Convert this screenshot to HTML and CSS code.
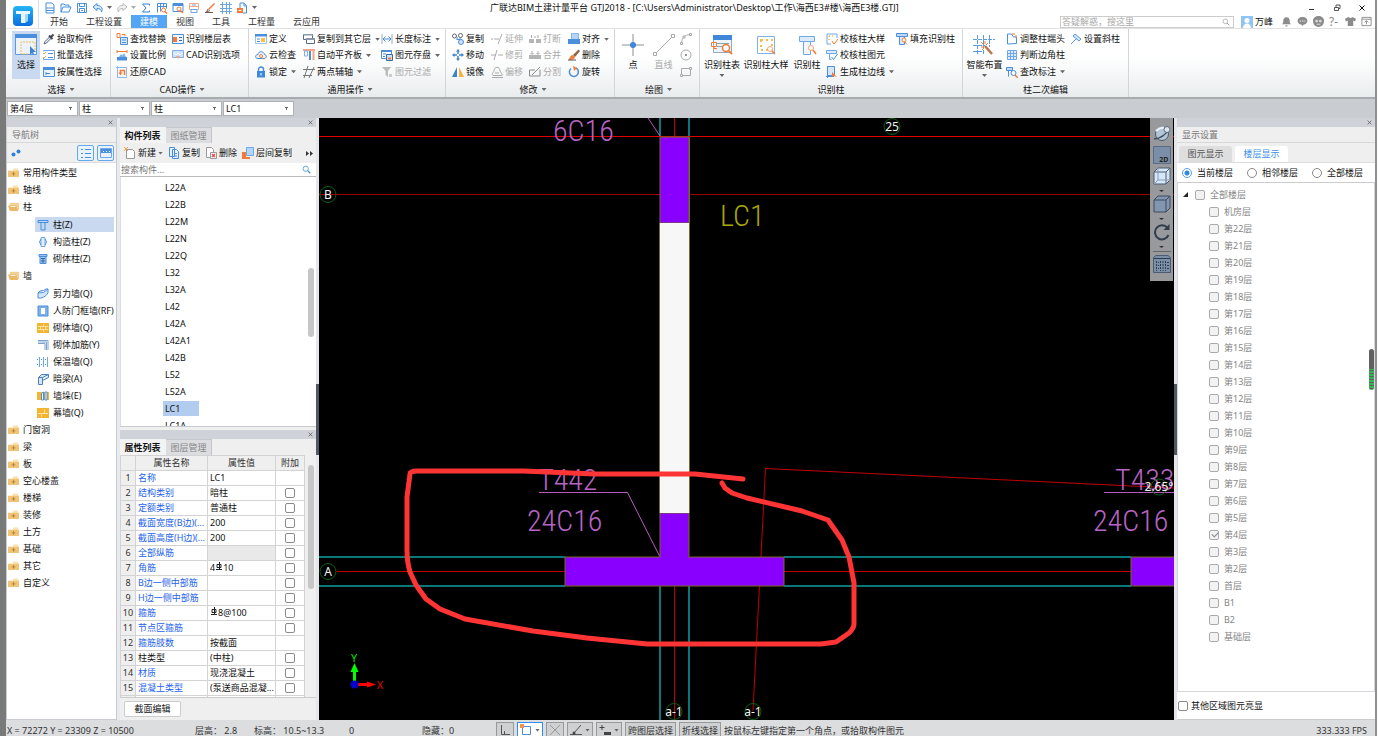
FILE: index.html
```html
<!DOCTYPE html>
<html lang="zh-CN">
<head>
<meta charset="utf-8">
<title>广联达BIM土建计量平台 GTJ2018</title>
<link rel="stylesheet" href="styles.css">
</head>
<body>
<svg class="sprite" aria-hidden="true">
  <symbol id="i-new" viewBox="0 0 12 12"><path d="M2 1h6l2 2v8H2zM2 6h8M2 8.500h8" fill="none" stroke="#4a8fdc"/></symbol>
  <symbol id="i-open" viewBox="0 0 12 12"><path d="M1 10V2h3l1 1h4v2M1 10l2-5h8l-2 5z" fill="none" stroke="#4a8fdc"/></symbol>
  <symbol id="i-save" viewBox="0 0 12 12"><path d="M1.500 1.500h9v9h-9zM3.500 1.500v3h5v-3M3.500 10.500v-4h5v4M5 8.500h2" fill="none" stroke="#4a8fdc"/></symbol>
  <symbol id="i-undo" viewBox="0 0 12 12"><path d="M5 1.500 1 5l4 3.500V6.500c3 0 4 1 4.500 3.500C11.500 6 9 3.500 5 3.500z" fill="#d6e7fa" stroke="#4a8fdc"/></symbol>
  <symbol id="i-redo" viewBox="0 0 12 12"><path d="M7 1.500 11 5 7 8.500V6.500c-3 0-4 1-4.500 3.500C.5 6 3 3.500 7 3.500z" fill="#f3f3f3" stroke="#b9b9b9"/></symbol>
  <symbol id="i-sum" viewBox="0 0 12 12"><path d="M9.500 3.500V2h-7L6 6l-3.500 4h7V8.500" fill="none" stroke="#2f80dc"/></symbol>
  <symbol id="i-calc" viewBox="0 0 12 12"><path d="M1.500 10.500v-9h9v5M1.500 4.500h9M4.500 1.500v8M7.500 1.500v4" fill="none" stroke="#4a8fdc"/><circle cx="7.500" cy="8" r="2" fill="#fff" stroke="#f47b37"/><path d="m9 9.500 2 2" stroke="#f47b37" stroke-width="1.500"/></symbol>
  <symbol id="i-view" viewBox="0 0 12 12"><path d="M1 1.500h10v8H1z" fill="#fff" stroke="#4a8fdc"/><path d="M1 1h10v3H1z" fill="#4a8fdc"/><circle cx="7" cy="7" r="2" fill="#fff" stroke="#f47b37"/><path d="m8.500 8.500 2.500 2.500" stroke="#f47b37" stroke-width="1.500"/></symbol>
  <symbol id="i-sheet" viewBox="0 0 12 12"><path d="M1.500 1.500h9v6h-9zM1.500 4.500h9" fill="none" stroke="#f6a77c"/><path d="M3 7.500h6v3H3z" fill="#fff" stroke="#6aa5e4"/><path d="M4 3h4" stroke="#6aa5e4"/></symbol>
  <symbol id="i-brush" viewBox="0 0 12 12"><path d="m4 7 6-6 1 1-6 6z" fill="#f47b37"/><path d="M4 7 2.500 10 6 8.500M1 10.500h8" fill="none" stroke="#7a5a50"/></symbol>
  <symbol id="i-grid" viewBox="0 0 12 12"><path d="M2.500 0v12M6.500 0v12M9.500 0v12M0 2.500h12M0 6.500h12M0 9.500h12" fill="none" stroke="#6aa5e4"/></symbol>
  <symbol id="i-lockdoc" viewBox="0 0 12 12"><path d="M4 6V1h4l2.500 2.500V11H7" fill="none" stroke="#4a8fdc"/><path d="M8 1v3h3" fill="none" stroke="#4a8fdc"/><path d="M1 6h6v5H1z" fill="#f47b37"/><path d="M2.500 8.500h3" stroke="#fff"/></symbol>
  <symbol id="i-select" viewBox="0 0 22 22"><path d="M.5.500h21v20H.5z" fill="#edf3fa" stroke="#5b9be2"/><path d="M0 0h22v4H0z" fill="#4a8fdc"/><path d="M20 16V8H6v12h7" fill="none" stroke="#f3bd52" stroke-dasharray="2 1"/><path d="M15 12v9l2-2 1 2 1-1-1-2h3z" fill="#3c83cf"/></symbol>
  <symbol id="i-pick" viewBox="0 0 12 12"><path d="m1 11 1-2.500 5-5L8.500 5l-5 5z" fill="#dbe9f7" stroke="#667"/><path d="m6 2.500 3.500 3.500M8 4l2.500-2.500" stroke="#445" stroke-width="2"/></symbol>
  <symbol id="i-batch" viewBox="0 0 12 12"><path d="M.5 2.500V1.500h11v9H.5V8" fill="none" stroke="#6ea8e6"/><path d="m0 4 1 1 2-2M0 8l1 1 2-2" fill="none" stroke="#f5ad4d"/><path d="M5 4.500h5M5 8.500h5" stroke="#4a8fdc"/></symbol>
  <symbol id="i-attr" viewBox="0 0 12 12"><path d="M.5 1.500h11v9H.5z" fill="#e9f3fd" stroke="#4a8fdc"/><path d="M0 1h12v3H0z" fill="#4a8fdc"/><path d="M3 6v3M3 7.500h4" stroke="#4a8fdc"/></symbol>
  <symbol id="i-find" viewBox="0 0 12 12"><path d="M4.500 4.500h7v7h-7z" fill="#d5e6f9" stroke="#4a8fdc"/><path d="M6 7h4M6 9.500h4" stroke="#4a8fdc"/><path d="M1 .5h3v4H1zM6 1.500h3v2" fill="none" stroke="#f47b37"/></symbol>
  <symbol id="i-scale" viewBox="0 0 12 12"><path d="M1 8h10v3.500H1z" fill="#4a8fdc"/><path d="m3 8 2-3 1.500 1.500L8 4l2 4z" fill="#7db3ee"/><path d="M1 4V1m0 1.500h10M11 1v3" fill="none" stroke="#f47b37"/></symbol>
  <symbol id="i-restore" viewBox="0 0 12 12"><path d="M1.500 0v11.500H11M0 1.500h10.500v9" fill="none" stroke="#8cb9ea"/><path d="M8.500 9V4.500h-4v3" fill="none" stroke="#f47b37" stroke-width="1.500"/><path d="m2.500 6.500 2 3 2-3z" fill="#f47b37"/></symbol>
  <symbol id="i-floor" viewBox="0 0 12 12"><path d="M.5 1.500h11v9H.5z" fill="#eef5fd" stroke="#4a8fdc"/><path d="M1 4h4v5H1z" fill="#f47b37"/><path d="M7 4.500h3M7 7.500h3" stroke="#35699f"/></symbol>
  <symbol id="i-cadopt" viewBox="0 0 12 12"><path d="M.5 1.500h11v7H.5z" fill="#cfe2f8" stroke="#7fb1e8"/><path d="M2 4l2 2 2-2 2 2 2-2" fill="none" stroke="#fff"/><path d="m4 7 2 3 2-3z" fill="#f5a57b"/></symbol>
  <symbol id="i-define" viewBox="0 0 12 12"><path d="M.5 1.500h11v9H.5z" fill="#fff" stroke="#9ac2ed"/><path d="M0 1h12v2.500H0z" fill="#4a8fdc"/><path d="M2 6h3M2 8.500h3" stroke="#4a8fdc"/><path d="M6 5h4v4H6z" fill="#f5c04d"/></symbol>
  <symbol id="i-cloud" viewBox="0 0 12 12"><path d="M3 9.500C-.5 9.500 0 5.500 3 5.500c.5-4 6-3.500 6.500 0 3 .5 2 4-.5 4z" fill="#eaf3fd" stroke="#4a8fdc"/><circle cx="6" cy="7" r="1.500" fill="#fff" stroke="#f47b37"/><path d="m7 8.500 2 2" stroke="#f47b37"/></symbol>
  <symbol id="i-lock" viewBox="0 0 12 12"><path d="M3.500 5V3.500a2.500 2.500 0 0 1 5 0V5" fill="none" stroke="#4a8fdc" stroke-width="1.500"/><path d="M2 5h8v6.500H2z" fill="#3f87d9"/><path d="M6 7v2.500" stroke="#fff"/></symbol>
  <symbol id="i-copyfloor" viewBox="0 0 12 12"><path d="M.5 1.500h9v5h-9z" fill="#fff" stroke="#556b86"/><path d="M3.500 5.500h8v5h-8z" fill="#fff" stroke="#556b86"/><path d="M3 5h9v2H3zM0 1h10v1.500H0z" fill="#8a98a8"/></symbol>
  <symbol id="i-align" viewBox="0 0 12 12"><path d="M0 1h12" stroke="#f0855c" stroke-width="1.500"/><path d="M1.500 2h3v5h-3z" fill="#fff" stroke="#7fb1e8"/><path d="M6 2h2v9H6z" fill="#4a8fdc"/><path d="M9.500 2h2v9h-2z" fill="#f5a57b"/></symbol>
  <symbol id="i-twopt" viewBox="0 0 12 12"><path d="M0 3.500h12M0 9.500h9M5 0 1 12M11 1 6 12" fill="none" stroke="#777"/></symbol>
  <symbol id="i-dim" viewBox="0 0 12 12"><path d="M1 1v10M11 1v10" stroke="#9ab"/><path d="M2 6h8M4.500 3.500 2 6l2.500 2.500M7.500 3.500 10 6 7.500 8.500" fill="none" stroke="#4a8fdc"/></symbol>
  <symbol id="i-store" viewBox="0 0 12 12"><path d="M.5 1.500h10v8H.5z" fill="#fff" stroke="#4a8fdc"/><path d="M0 1h11v2H0z" fill="#4a8fdc"/><path d="M2 5h3M2 7.500h2" stroke="#4a8fdc"/><path d="M5.500 5.500h6v6h-6z" fill="#cfe2f8" stroke="#35699f"/><path d="M7 9.500h3" stroke="#f47b37" stroke-width="2"/></symbol>
  <symbol id="i-filter" viewBox="0 0 12 12"><path d="M1 1h9L7 5v6L4.500 9V5z" fill="#bbb"/><path d="M8 8h3v3H8z" fill="#ccc"/></symbol>
  <symbol id="i-copy" viewBox="0 0 12 12"><circle cx="2.500" cy="3" r="2" fill="none" stroke="#666"/><circle cx="8.500" cy="2.500" r="2" fill="none" stroke="#666"/><path d="M5 6.500h3v-2M5 4v3" fill="none" stroke="#4a8fdc"/><circle cx="9" cy="9" r="2.500" fill="#cfe2f8" stroke="#4a8fdc"/></symbol>
  <symbol id="i-move" viewBox="0 0 12 12"><path d="M6 0 4 2.500h4zM6 12 4 9.500h4zM0 6l2.500-2v4zM12 6 9.500 4v4z" fill="#3c83cf"/><path d="M6 2v3M6 7v3M2 6h3M7 6h3" stroke="#3c83cf" stroke-width="1.500"/></symbol>
  <symbol id="i-mirror" viewBox="0 0 12 12"><path d="M5 1v10H0z" fill="#3c83cf"/><path d="M7 1v10h5z" fill="#f5b23d"/></symbol>
  <symbol id="i-extend" viewBox="0 0 12 12"><path d="M0 6h2M3 6h5M11 1 7 11" fill="none" stroke="#aaa"/></symbol>
  <symbol id="i-trim" viewBox="0 0 12 12"><path d="M0 6h5M7 6h5M6 1 3 11" fill="none" stroke="#aaa"/></symbol>
  <symbol id="i-offset" viewBox="0 0 12 12"><path d="M2 9.500C0 8 3 6 3 5c0-5 6-5 6 0 0 1 3 3 2 4.500zM1 11.500h11M4 7h4" fill="none" stroke="#aaa"/></symbol>
  <symbol id="i-break" viewBox="0 0 12 12"><path d="M0 6h5v4H0zM7 6h5v4H7z" fill="#b5b5b5"/><path d="M2.500 2v3M9 2v3M5 4h2" stroke="#aaa"/></symbol>
  <symbol id="i-merge" viewBox="0 0 12 12"><path d="M0 6h12v4H0z" fill="#b5b5b5"/><path d="M3 2v3M9 2v3M1.500 4 3 5.500 4.500 4M7.500 4 9 5.500 10.500 4" fill="none" stroke="#aaa"/></symbol>
  <symbol id="i-split" viewBox="0 0 12 12"><path d="M11 3.500V10H.5V4H6M3 9l8-8" fill="none" stroke="#8a8a8a"/></symbol>
  <symbol id="i-alignto" viewBox="0 0 12 12"><path d="M3.500.500h7v6h-7z" fill="#b5d3f5" stroke="#86b5ea"/><path d="M0 6h12v5H0z" fill="#4a8fdc"/></symbol>
  <symbol id="i-erase" viewBox="0 0 12 12"><path d="m5 6 5.500-5.500L12 2 7 8z" fill="#8a6548"/><path d="M1 11c0-3 2-5 4-5l2 2c0 2-3 3-6 3z" fill="#f0803a"/><path d="M0 11h8" stroke="#555"/></symbol>
  <symbol id="i-rotate" viewBox="0 0 12 12"><path d="M3 2.500a4.500 4.500 0 1 0 5-.5" fill="none" stroke="#4a8fdc" stroke-width="1.500"/><path d="m5 0 4 2-3 3z" fill="#f47b37"/></symbol>
  <symbol id="i-point" viewBox="0 0 22 22"><path d="M11 0v22M0 11h22" stroke="#8a9096"/><circle cx="11" cy="11" r="3" fill="#3f87d9"/></symbol>
  <symbol id="i-line" viewBox="0 0 22 22"><path d="M2 20 20 2" stroke="#aaa"/><path d="M.5 18.500h3v3h-3zM18.500.500h3v3h-3z" fill="#fff" stroke="#aaa"/></symbol>
  <symbol id="i-arc" viewBox="0 0 12 12"><path d="M1.500 10Q2 2 10 1.500" fill="none" stroke="#aaa"/><path d="M.5 9.500h2v2h-2zM9.500.500h2v2h-2zM3 3h2v2H3z" fill="#fff" stroke="#aaa"/></symbol>
  <symbol id="i-circle" viewBox="0 0 12 12"><circle cx="6" cy="6" r="5" fill="none" stroke="#aaa"/><path d="M5 5h2v2H5z" fill="#999"/></symbol>
  <symbol id="i-rect" viewBox="0 0 12 12"><path d="M1.500 2.500h9v7h-9z" fill="none" stroke="#aaa"/><path d="M.5 8.500h2v2h-2zM9.500 1.500h2v2h-2z" fill="#fff" stroke="#aaa"/></symbol>
  <symbol id="i-coltable" viewBox="0 0 22 22"><path d="M2.500 2.500h18v16h-18z" fill="#eef4fb" stroke="#98a8b8"/><path d="M2 1h19v5H2z" fill="#3f87d9"/><path d="M6 9.500h12M6 12.500h6" stroke="#8aa"/><path d="M.5 8.500h5v4h-5zM3 12.500v2h3" fill="none" stroke="#f47b37"/><circle cx="15" cy="14" r="3.500" fill="#fff" stroke="#f47b37" stroke-width="1.500"/><path d="m18 17 3 3" stroke="#f47b37" stroke-width="2"/></symbol>
  <symbol id="i-coldetail" viewBox="0 0 22 22"><path d="M2.500 2.500h17v17h-17z" fill="#fff" stroke="#7fb1e8"/><path d="M6 6h11v10H6z" fill="none" stroke="#f3bd52" stroke-width="2" stroke-dasharray="2 3"/><circle cx="15" cy="15" r="2.500" fill="#fff" stroke="#f5a57b"/><path d="m17 17 3 3" stroke="#f47b37" stroke-width="1.500"/></symbol>
  <symbol id="i-column" viewBox="0 0 22 22"><path d="M3.500 2.500h15v5h-15z" fill="#dceafa" stroke="#6ea8e6"/><path d="M7.500 7.500h7v13h-7z" fill="#f3f8fe" stroke="#6ea8e6"/><circle cx="15" cy="14" r="2.500" fill="#fff" stroke="#f5a57b"/><path d="m17 16 3 4" stroke="#f47b37" stroke-width="1.500"/></symbol>
  <symbol id="i-chkdetail" viewBox="0 0 12 12"><path d="M11 5V1H1v10h4" fill="none" stroke="#6ea8e6"/><path d="M3 3h6M3 3v6" stroke="#f3bd52" stroke-width="1.500" stroke-dasharray="1 2"/><path d="m6 8 2 3 4-5" fill="none" stroke="#f47b37"/></symbol>
  <symbol id="i-chkelem" viewBox="0 0 12 12"><path d="M.5 1.500h10v3H.5zM3.500 4.500v6h2" fill="#dceafa" stroke="#6ea8e6"/><path d="m5.500 8 2 2.500L11.500 5" fill="none" stroke="#4a8fdc"/></symbol>
  <symbol id="i-gen" viewBox="0 0 12 12"><path d="M1.500.500h7v9h-7z" fill="#d5e6f9" stroke="#4a8fdc"/><path d="M1.500 0v12M0 10.500h8" stroke="#4a8fdc"/><path d="M6 6v5l2-1 3 1z" fill="#f47b37"/></symbol>
  <symbol id="i-fill" viewBox="0 0 12 12"><path d="M.5.500h11v3H.5z" fill="#bcd8f6" stroke="#4a8fdc"/><path d="M3.500 3.500h5v8h-5z" fill="#dceafa" stroke="#4a8fdc"/><circle cx="8" cy="7" r="2" fill="#fff" stroke="#f47b37"/><path d="m9 9 2 2.500" stroke="#f47b37"/></symbol>
  <symbol id="i-smart" viewBox="0 0 22 22"><path d="M4.500 1v20M10.500 1v20M16.500 1v12M0 5.500h22M0 11.500h12M0 17.500h9" fill="none" stroke="#5b9be2" stroke-dasharray="4 1"/><path d="m12 12 7 8" stroke="#b8774e" stroke-width="2.500"/><path d="m8 8 3 3M12 7v3M8 13h3M15 9l-2 2M9 16l2-2" stroke="#f47b37"/></symbol>
  <symbol id="i-corner" viewBox="0 0 12 12"><path d="M1.500 11V1h4l2 3h3v6.500z" fill="#fff" stroke="#4a8fdc"/><path d="M6 1h3M10 2v3" stroke="#f47b37"/></symbol>
  <symbol id="i-judge" viewBox="0 0 12 12"><path d="M1.500 1.500h9v9h-9zM4.500 1v10M7.500 1v10M1 4.500h10M1 7.500h10" fill="#dceafa" stroke="#6ea8e6"/></symbol>
  <symbol id="i-mark" viewBox="0 0 12 12"><path d="M.5 1.500h6v3h-6zM2.500 4.500v6" fill="#bcd8f6" stroke="#4a8fdc"/><circle cx="7.500" cy="7" r="2.500" fill="#fff" stroke="#4a8fdc"/><path d="m9 9 3 3" stroke="#f47b37" stroke-width="1.500"/></symbol>
  <symbol id="i-slant" viewBox="0 0 12 12"><path d="m5 1 6 5-2 2-6-5zM6.500 5.500l-5.500 5.500" fill="#d5e6f9" stroke="#5b9be2"/></symbol>
  <symbol id="i-search" viewBox="0 0 12 12"><circle cx="5" cy="5" r="3.500" fill="none" stroke="currentColor"/><path d="m7.500 7.500 3.500 3.500" stroke="currentColor" stroke-width="1.500"/></symbol>
  <symbol id="i-user" viewBox="0 0 12 12"><path d="M0 0h12v12H0z" fill="#8fc4f5"/><circle cx="6" cy="4.500" r="2.500" fill="#fff"/><path d="M2 12c0-6 8-6 8 0z" fill="#fff"/></symbol>
  <symbol id="i-bell" viewBox="0 0 12 12"><path d="M1 9c1.500-1 1.500-2 1.500-4 0-5 7-5 7 0 0 2 0 3 1.500 4zM5 10h2v1.500H5z" fill="#8b8b8b"/></symbol>
  <symbol id="i-chat" viewBox="0 0 12 12"><path d="M6 1c7 0 7 8 1 8.500L6 11 5 9.500C-1 9-1 1 6 1z" fill="#8b8b8b"/><path d="M3 5.500h1.500M5.500 5.500H7M8 5.500h1" stroke="#fff"/></symbol>
  <symbol id="i-face" viewBox="0 0 12 12"><path d="M6 0c3 0 6 2 6 5 0 5-3 7-6 7S0 10 0 5c0-3 3-5 6-5z" fill="#8b8b8b"/><circle cx="4" cy="5.500" r="1.500" fill="#ddd"/><circle cx="8" cy="5.500" r="1.500" fill="#ddd"/><path d="M4 9h4" stroke="#ddd"/></symbol>
  <symbol id="i-shirt" viewBox="0 0 12 12"><path d="M4 1 0 3l1 3 2-1v6h6V5l2 1 1-3-4-2Q6 3.500 4 1z" fill="#8b8b8b"/></symbol>
  <symbol id="i-collapse" viewBox="0 0 12 12"><path d="M1 1.500h10v9H1zM1 3.500h10M6 9V5.500M4 7l2-2 2 2" fill="none" stroke="#8b8b8b"/></symbol>
  <symbol id="i-min" viewBox="0 0 12 12"><path d="M3 7.500h5" stroke="#333"/></symbol>
  <symbol id="i-max" viewBox="0 0 12 12"><path d="M3.500 5.500h4v3h-4zM5 5V3h4v3.500H8" fill="none" stroke="#555"/></symbol>
  <symbol id="i-close" viewBox="0 0 12 12"><path d="m3.500 3.500 5 5M8.500 3.500l-5 5" stroke="currentColor"/></symbol>
  <symbol id="i-folder" viewBox="0 0 12 12"><path d="M0 4h5l1-2h5v2h1v7H0z" fill="#f0c377"/><path d="M6 2h5v2H5z" fill="#fae3b5"/><path d="M6 5.500v4M4 7.500h4" stroke="#b08430"/></symbol>
  <symbol id="i-folderopen" viewBox="0 0 12 12"><path d="M2 2h10v8H2z" fill="#f4d192"/><path d="M0 5h9l2 6H2z" fill="#edb866"/><path d="M3 6h5" stroke="#fff"/></symbol>
  <symbol id="i-col" viewBox="0 0 12 12"><path d="M1 1.500h10v2H1zM4 3.500h4v7.500H4z" fill="#bcd8f6" stroke="#4a8fdc"/></symbol>
  <symbol id="i-gzz" viewBox="0 0 12 12"><path d="M4 1.500h4v9H4z" fill="#e5f0fc" stroke="#6ea8e6"/><path d="M4 3Q1 6 4 9M8 3q3 3 0 6" fill="none" stroke="#4a8fdc"/></symbol>
  <symbol id="i-qtz" viewBox="0 0 12 12"><path d="M2 1.500h8v2H2zM3 3.500h6v7H3z" fill="#9cc5f2" stroke="#4a8fdc"/><path d="M4 5.500h4M4 8h4M6 5v5" stroke="#3069a8"/></symbol>
  <symbol id="i-wall" viewBox="0 0 12 12"><path d="M1 5q6 1 10-4v4Q7 11 1 10zM1 5l2-2q4 0 6-2h2" fill="#d5e6f9" stroke="#4a8fdc"/></symbol>
  <symbol id="i-frame" viewBox="0 0 12 12"><path d="M1 1h10v10H1z" fill="#7fb1e8" stroke="#4a8fdc"/><path d="M4 3h4v6H4z" fill="#fff"/></symbol>
  <symbol id="i-brick" viewBox="0 0 12 12"><path d="M0 1h12v10H0z" fill="#f5b52e"/><path d="M1 4.500h10M1 7.500h10M6.500 2v2M3.500 5v2M8.500 5v2M6.500 8v2" stroke="#fde2a0"/></symbol>
  <symbol id="i-rebar" viewBox="0 0 12 12"><path d="M1 1.500h10V11M1 4.500h7V11M1 3h8.500v8" fill="none" stroke="#7da2cc"/></symbol>
  <symbol id="i-insul" viewBox="0 0 12 12"><path d="M2.500 1v10M6.500 1v10M10.500 1v10" stroke="#6ea8e6"/><path d="M4 3.500h1M4 8.500h1M8 3.500h1M8 8.500h1M0 3.500h1M0 8.500h1" stroke="#4a8fdc"/></symbol>
  <symbol id="i-beam" viewBox="0 0 12 12"><path d="M1.500 4.500h4v7h-4zM1.500 4.500l3-3h7l-6 3M11.500 1.500v3l-6 3" fill="#d5e6f9" stroke="#4a80bc"/></symbol>
  <symbol id="i-pier" viewBox="0 0 12 12"><path d="M0 2h12v8H0z" fill="#f5b52e"/><path d="M4.500 3.500 6.500 2v8h-2zM8 2h2v8H8z" fill="#fff" stroke="#4a8fdc"/></symbol>
  <symbol id="i-curtain" viewBox="0 0 12 12"><path d="M0 1h12v10H0z" fill="#f5b52e"/><path d="M1 6.500h10M7.500 2v4M4.500 7v3" stroke="#fde2a0"/></symbol>
  <symbol id="i-dots" viewBox="0 0 12 12"><circle cx="3.500" cy="7.500" r="2" fill="#2f80dc"/><circle cx="8.500" cy="4.500" r="2" fill="#2f80dc"/></symbol>
  <symbol id="i-list" viewBox="0 0 12 12"><path d="M1 2.500h2M1 6.500h2M1 10.500h2M5 2.500h6M5 6.500h6M5 10.500h6" stroke="#4a8fdc"/></symbol>
  <symbol id="i-cards" viewBox="0 0 12 12"><path d="M.5 1.500h11v9H.5z" fill="#eaf3fd" stroke="#6ea8e6"/><path d="M1 2h10v4H1z" fill="#4a8fdc"/><path d="M3 4.500h1M6 4.500h1M9 4.500h1" stroke="#fff"/></symbol>
  <symbol id="i-add" viewBox="0 0 12 12"><path d="M2.500 2.500h6l2 2v7h-8z" fill="#fff" stroke="#9a9a9a"/><path d="m0 0 4 4M4 0 0 4" stroke="#f5a04d"/></symbol>
  <symbol id="i-dup" viewBox="0 0 12 12"><path d="M1.500.500h5v9h-5zM4.500 2.500h4l2 2v7h-6z" fill="#e5f0fc" stroke="#4a8fdc"/><path d="M6 6.500h3M6 9h3" stroke="#4a8fdc"/></symbol>
  <symbol id="i-del" viewBox="0 0 12 12"><path d="M1.500.500h5l2 2v8h-7z" fill="#fff" stroke="#9a9a9a"/><path d="M5.500 5.500h6v6h-6z" fill="#fff" stroke="#999"/><path d="m7 7 3 3M10 7l-3 3" stroke="#e05050" stroke-width="1.500"/></symbol>
  <symbol id="i-layers" viewBox="0 0 12 12"><path d="M0 5h4v5h4v2H0z" fill="#f47b37"/><path d="M4.500.500h7v8h-7z" fill="#b5d5f8" stroke="#6ea8e6"/></symbol>
  <symbol id="i-more" viewBox="0 0 12 12"><path d="M2 4v5l3-2.500zM6 4v5l3-2.500z" fill="#333"/></symbol>
  <symbol id="i-orbit" viewBox="0 0 18 18"><circle cx="9" cy="9" r="6.500" fill="#b5c5d8" stroke="#49586b"/><path d="M3 6q4-4 8-3" fill="none" stroke="#edf3f9" stroke-width="2"/><path d="M1 14Q11 13 16 4" fill="none" stroke="#3c4a5c" stroke-width="1.500"/><circle cx="14" cy="4.500" r="3" fill="#dce5ee" stroke="#5a697c"/></symbol>
  <symbol id="i-2d" viewBox="0 0 18 18"><path d="M.5.500h17v17H.5z" fill="#7b8ea8" stroke="#5a6b84"/></symbol>
  <symbol id="i-box" viewBox="0 0 18 18"><path d="M1 5h12v12H1zM1 5l4-4h12v12l-4 4M13 5l4-4" fill="#d4e8fa" stroke="#4c5a6c"/><path d="M5 1v12h12M5 13l-4 4" fill="none" stroke="#8a9aae"/></symbol>
  <symbol id="i-cube" viewBox="0 0 18 18"><path d="M1 5h12v12H1zM1 5l4-4h12v12l-4 4M13 5l4-4" fill="#8296b0" stroke="#3c4a5c"/></symbol>
  <symbol id="i-turn" viewBox="0 0 18 18"><path d="M14.500 5a7 7 0 1 0 1 7" fill="none" stroke="#303d4d" stroke-width="2"/><path d="M16.500 1v6h-6z" fill="#303d4d"/></symbol>
  <symbol id="i-prop" viewBox="0 0 18 18"><path d="M.5 2.500 3 .5h12l2.500 2v15H.5z" fill="#7b8ea8" stroke="#4b5b72"/><path d="M1 3.500h16" stroke="#303d4d"/><path d="M3.500 6v10M7.500 6v10M12.500 6v10M10 6v10" stroke="#303d4d" stroke-dasharray="2 1"/><path d="M5 7.500h1M5 10.500h1M5 13.500h1M14 7.500h2M14 10.500h2M14 13.500h2" stroke="#303d4d"/></symbol>
  <symbol id="i-angle" viewBox="0 0 12 12"><path d="M2.500 1v9.500H11M5.500 10V7" fill="none" stroke="#555"/></symbol>
  <symbol id="i-boxsel" viewBox="0 0 12 12"><path d="M2.500 2.500h8v8h-8z" fill="#fff" stroke="#4a8fdc"/><path d="M0 0h4v4H0z" fill="#f5904d"/></symbol>
  <symbol id="i-cross" viewBox="0 0 12 12"><path d="m1 1 10 10M11 1 1 11" stroke="#999"/></symbol>
  <symbol id="i-slope" viewBox="0 0 12 12"><path d="M11 1 4 9M0 10.500h12" fill="none" stroke="#555"/><circle cx="4" cy="9" r="1.500" fill="#444"/></symbol>
  <symbol id="i-plusbox" viewBox="0 0 12 12"><path d="M3 1v5M.5 3.500h5" stroke="#444"/><path d="M5 8h7v3H5z" fill="#444"/></symbol>
</svg>

<header class="titlebar">
  <svg class="logo" viewBox="0 0 22 22" role="img" aria-label="GTJ"><defs><linearGradient id="lg" x1="0" y1="0" x2="0" y2="1"><stop offset="0" stop-color="#25b4f5"/><stop offset="1" stop-color="#0a6fe0"/></linearGradient></defs><rect x="1" y="1" width="20" height="20" rx="4" fill="url(#lg)"/><path d="M4 6h14v3h-5v9H9V9H4z" fill="#eaf7ff"/><path d="M13 9v9l3-2V9z" fill="#9fd6fb"/></svg>
  <div class="titlerows">
    <div class="toprow">
      <nav class="quick" aria-label="快速访问">
        <button aria-label="新建工程"><svg><use href="#i-new"/></svg></button><button aria-label="打开"><svg><use href="#i-open"/></svg></button><button aria-label="保存"><svg><use href="#i-save"/></svg></button><button aria-label="撤销"><svg><use href="#i-undo"/></svg><i class="caret"></i></button><button aria-label="恢复"><svg><use href="#i-redo"/></svg><i class="caret dim"></i></button><button aria-label="汇总"><svg><use href="#i-sum"/></svg></button><button aria-label="查量"><svg><use href="#i-calc"/></svg></button><button aria-label="查看"><svg><use href="#i-view"/></svg></button><button aria-label="报表"><svg><use href="#i-sheet"/></svg></button><button aria-label="刷"><svg><use href="#i-brush"/></svg></button><button aria-label="轴网"><svg><use href="#i-grid"/></svg></button><button aria-label="锁定工程"><svg><use href="#i-lockdoc"/></svg></button><i class="caret"></i>
      </nav>
      <h1 class="apptitle">广联达BIM土建计量平台 GTJ2018 - [C:\Users\Administrator\Desktop\工作\海西E3#楼\海西E3楼.GTJ]</h1>
      <div class="winctl"><button aria-label="最小化"><svg><use href="#i-min"/></svg></button><button aria-label="还原"><svg><use href="#i-max"/></svg></button><button aria-label="关闭"><svg><use href="#i-close"/></svg></button></div>
    </div>
    <div class="tabrow">
      <nav class="tabs"><button>开始</button><button>工程设置</button><button class="on">建模</button><button>视图</button><button>工具</button><button>工程量</button><button>云应用</button></nav>
      <div class="help">
        <label class="ask"><input type="text" placeholder="答疑解惑，搜这里" aria-label="答疑解惑"><svg><use href="#i-search"/></svg></label>
        <button class="user"><svg><use href="#i-user"/></svg>万峰</button>
        <div class="helpicons"><button aria-label="通知"><svg><use href="#i-bell"/></svg></button><button aria-label="消息"><svg><use href="#i-chat"/></svg></button><button aria-label="客服"><svg><use href="#i-face"/></svg></button><button class="q">?<span>-</span></button><button aria-label="皮肤"><svg><use href="#i-shirt"/></svg></button><button aria-label="收起"><svg><use href="#i-collapse"/></svg></button></div>
      </div>
    </div>
  </div>
</header>

<section class="ribbon">
  <div class="group g1"><div class="tools">
    <button class="big on"><svg><use href="#i-select"/></svg>选择</button>
    <div class="stack"><button><svg><use href="#i-pick"/></svg>拾取构件</button><button><svg><use href="#i-batch"/></svg>批量选择</button><button><svg><use href="#i-attr"/></svg>按属性选择</button></div>
  </div><p class="name">选择<i class="caret"></i></p></div>
  <div class="group g2"><div class="tools">
    <div class="stack"><button><svg><use href="#i-find"/></svg>查找替换</button><button><svg><use href="#i-scale"/></svg>设置比例</button><button><svg><use href="#i-restore"/></svg>还原CAD</button></div>
    <div class="stack"><button><svg><use href="#i-floor"/></svg>识别楼层表</button><button><svg><use href="#i-cadopt"/></svg>CAD识别选项</button></div>
  </div><p class="name">CAD操作<i class="caret"></i></p></div>
  <div class="group g3"><div class="tools">
    <div class="stack"><button><svg><use href="#i-define"/></svg>定义</button><button><svg><use href="#i-cloud"/></svg>云检查</button><button><svg><use href="#i-lock"/></svg>锁定<i class="caret"></i></button></div>
    <div class="stack"><button><svg><use href="#i-copyfloor"/></svg>复制到其它层<i class="caret"></i></button><button><svg><use href="#i-align"/></svg>自动平齐板<i class="caret"></i></button><button><svg><use href="#i-twopt"/></svg>两点辅轴<i class="caret"></i></button></div>
    <div class="stack"><button><svg><use href="#i-dim"/></svg>长度标注<i class="caret"></i></button><button><svg><use href="#i-store"/></svg>图元存盘<i class="caret"></i></button><button disabled><svg><use href="#i-filter"/></svg>图元过滤</button></div>
  </div><p class="name">通用操作<i class="caret"></i></p></div>
  <div class="group g4"><div class="tools">
    <div class="stack"><button><svg><use href="#i-copy"/></svg>复制</button><button><svg><use href="#i-move"/></svg>移动</button><button><svg><use href="#i-mirror"/></svg>镜像</button></div>
    <div class="stack"><button disabled><svg><use href="#i-extend"/></svg>延伸</button><button disabled><svg><use href="#i-trim"/></svg>修剪</button><button disabled><svg><use href="#i-offset"/></svg>偏移</button></div>
    <div class="stack"><button disabled><svg><use href="#i-break"/></svg>打断</button><button disabled><svg><use href="#i-merge"/></svg>合并</button><button disabled><svg><use href="#i-split"/></svg>分割</button></div>
    <div class="stack"><button><svg><use href="#i-alignto"/></svg>对齐<i class="caret"></i></button><button><svg><use href="#i-erase"/></svg>删除</button><button><svg><use href="#i-rotate"/></svg>旋转</button></div>
  </div><p class="name">修改<i class="caret"></i></p></div>
  <div class="group g5"><div class="tools">
    <button class="big"><svg><use href="#i-point"/></svg>点</button>
    <button class="big" disabled><svg><use href="#i-line"/></svg>直线</button>
    <div class="stack"><button disabled aria-label="弧"><svg><use href="#i-arc"/></svg></button><button disabled aria-label="圆"><svg><use href="#i-circle"/></svg></button><button disabled aria-label="矩形"><svg><use href="#i-rect"/></svg></button></div>
  </div><p class="name">绘图<i class="caret"></i></p></div>
  <div class="group g6"><div class="tools">
    <button class="big"><svg><use href="#i-coltable"/></svg>识别柱表<i class="caret"></i></button>
    <button class="big"><svg><use href="#i-coldetail"/></svg>识别柱大样</button>
    <button class="big"><svg><use href="#i-column"/></svg>识别柱</button>
    <div class="stack"><button><svg><use href="#i-chkdetail"/></svg>校核柱大样</button><button><svg><use href="#i-chkelem"/></svg>校核柱图元</button><button><svg><use href="#i-gen"/></svg>生成柱边线<i class="caret"></i></button></div>
    <div class="stack"><button><svg><use href="#i-fill"/></svg>填充识别柱</button></div>
  </div><p class="name">识别柱</p></div>
  <div class="group g7"><div class="tools">
    <button class="big"><svg><use href="#i-smart"/></svg>智能布置<i class="caret"></i></button>
    <div class="stack"><button><svg><use href="#i-corner"/></svg>调整柱端头</button><button><svg><use href="#i-judge"/></svg>判断边角柱</button><button><svg><use href="#i-mark"/></svg>查改标注<i class="caret"></i></button></div>
    <div class="stack"><button><svg><use href="#i-slant"/></svg>设置斜柱</button></div>
  </div><p class="name">柱二次编辑</p></div>
</section>

<div class="picker">
  <select aria-label="楼层"><option>第4层</option></select><select aria-label="类别"><option>柱</option></select><select aria-label="类型"><option>柱</option></select><select aria-label="构件"><option>LC1</option></select>
</div>

<main class="work">
  <aside class="nav">
    <div class="grip"><button aria-label="关闭导航树"><svg><use href="#i-close"/></svg></button></div>
    <h2 class="ptitle">导航树</h2>
    <div class="navbar"><svg><use href="#i-dots"/></svg><span class="modes"><button aria-label="列表"><svg><use href="#i-list"/></svg></button><button aria-label="卡片"><svg><use href="#i-cards"/></svg></button></span></div>
    <ul class="tree">
      <li><span><svg><use href="#i-folder"/></svg>常用构件类型</span></li>
      <li><span><svg><use href="#i-folder"/></svg>轴线</span></li>
      <li><span><svg><use href="#i-folderopen"/></svg>柱</span>
        <ul><li class="on"><svg><use href="#i-col"/></svg>柱(Z)</li><li><svg><use href="#i-gzz"/></svg>构造柱(Z)</li><li><svg><use href="#i-qtz"/></svg>砌体柱(Z)</li></ul></li>
      <li><span><svg><use href="#i-folderopen"/></svg>墙</span>
        <ul><li><svg><use href="#i-wall"/></svg>剪力墙(Q)</li><li><svg><use href="#i-frame"/></svg>人防门框墙(RF)</li><li><svg><use href="#i-brick"/></svg>砌体墙(Q)</li><li><svg><use href="#i-rebar"/></svg>砌体加筋(Y)</li><li><svg><use href="#i-insul"/></svg>保温墙(Q)</li><li><svg><use href="#i-beam"/></svg>暗梁(A)</li><li><svg><use href="#i-pier"/></svg>墙垛(E)</li><li><svg><use href="#i-curtain"/></svg>幕墙(Q)</li></ul></li>
      <li><span><svg><use href="#i-folder"/></svg>门窗洞</span></li>
      <li><span><svg><use href="#i-folder"/></svg>梁</span></li>
      <li><span><svg><use href="#i-folder"/></svg>板</span></li>
      <li><span><svg><use href="#i-folder"/></svg>空心楼盖</span></li>
      <li><span><svg><use href="#i-folder"/></svg>楼梯</span></li>
      <li><span><svg><use href="#i-folder"/></svg>装修</span></li>
      <li><span><svg><use href="#i-folder"/></svg>土方</span></li>
      <li><span><svg><use href="#i-folder"/></svg>基础</span></li>
      <li><span><svg><use href="#i-folder"/></svg>其它</span></li>
      <li><span><svg><use href="#i-folder"/></svg>自定义</span></li>
    </ul>
  </aside>

  <div class="mid">
    <section class="comps">
      <div class="grip"><button aria-label="关闭构件列表"><svg><use href="#i-close"/></svg></button></div>
      <div class="ptabs"><button class="on">构件列表</button><button>图纸管理</button></div>
      <div class="compbar"><button><svg><use href="#i-add"/></svg>新建<i class="caret"></i></button><button><svg><use href="#i-dup"/></svg>复制</button><button><svg><use href="#i-del"/></svg>删除</button><button><svg><use href="#i-layers"/></svg>层间复制</button><button class="more" aria-label="更多"><svg><use href="#i-more"/></svg></button></div>
      <label class="find"><input type="text" placeholder="搜索构件..." aria-label="搜索构件"><svg><use href="#i-search"/></svg></label>
      <div class="listbox"><ul><li>L22A</li><li>L22B</li><li>L22M</li><li>L22N</li><li>L22Q</li><li>L32</li><li>L32A</li><li>L42</li><li>L42A</li><li>L42A1</li><li>L42B</li><li>L52</li><li>L52A</li><li><mark>LC1</mark></li><li>LC1A</li></ul><i class="thumb"></i></div>
    </section>
    <section class="props">
      <div class="grip"><button aria-label="关闭属性列表"><svg><use href="#i-close"/></svg></button></div>
      <div class="ptabs"><button class="on">属性列表</button><button>图层管理</button></div>
      <div class="tablebox">
        <table>
          <colgroup><col class="c1"><col class="c2"><col class="c3"><col class="c4"></colgroup>
          <thead><tr><th></th><th>属性名称</th><th>属性值</th><th>附加</th></tr></thead>
          <tbody>
            <tr><th>1</th><td>名称</td><td>LC1</td><td></td></tr>
            <tr><th>2</th><td>结构类别</td><td>暗柱</td><td><input type="checkbox" aria-label="附加 结构类别"></td></tr>
            <tr><th>3</th><td>定额类别</td><td>普通柱</td><td><input type="checkbox" aria-label="附加 定额类别"></td></tr>
            <tr><th>4</th><td>截面宽度(B边)(...</td><td>200</td><td><input type="checkbox" aria-label="附加 截面宽度"></td></tr>
            <tr><th>5</th><td>截面高度(H边)(...</td><td>200</td><td><input type="checkbox" aria-label="附加 截面高度"></td></tr>
            <tr><th>6</th><td>全部纵筋</td><td class="off"></td><td><input type="checkbox" aria-label="附加 全部纵筋"></td></tr>
            <tr><th>7</th><td>角筋</td><td>4<svg class="bar" viewBox="0 0 8 9" role="img" aria-label="C"><path d="M2 2.500h4v3H2zM4.500 0v7M1 7.500h6" fill="none" stroke="#222"/></svg>10</td><td><input type="checkbox" aria-label="附加 角筋"></td></tr>
            <tr><th>8</th><td>B边一侧中部筋</td><td></td><td><input type="checkbox" aria-label="附加 B边"></td></tr>
            <tr><th>9</th><td>H边一侧中部筋</td><td></td><td><input type="checkbox" aria-label="附加 H边"></td></tr>
            <tr><th>10</th><td>箍筋</td><td><svg class="bar" viewBox="0 0 8 9" role="img" aria-label="C"><path d="M2 2.500h4v3H2zM4.500 0v7M1 7.500h6" fill="none" stroke="#222"/></svg>8@100</td><td><input type="checkbox" aria-label="附加 箍筋"></td></tr>
            <tr><th>11</th><td>节点区箍筋</td><td></td><td><input type="checkbox" aria-label="附加 节点区箍筋"></td></tr>
            <tr><th>12</th><td>箍筋肢数</td><td>按截面</td><td></td></tr>
            <tr><th>13</th><td class="plain">柱类型</td><td>(中柱)</td><td><input type="checkbox" aria-label="附加 柱类型"></td></tr>
            <tr><th>14</th><td>材质</td><td>现浇混凝土</td><td><input type="checkbox" aria-label="附加 材质"></td></tr>
            <tr><th>15</th><td>混凝土类型</td><td>(泵送商品混凝...</td><td><input type="checkbox" aria-label="附加 混凝土类型"></td></tr>
            <tr><th></th><td></td><td></td><td><input type="checkbox" aria-label="附加"></td></tr>
          </tbody>
        </table>
        <i class="thumb"></i>
      </div>
      <div class="foot"><button>截面编辑</button></div>
    </section>
  </div>

  <div class="split"><i></i></div>

  <section class="canvas">
    <svg class="drawing" role="img" aria-label="平面图">
      <g transform="translate(-319 -118)" fill="none">
        <g stroke="#087878" stroke-width="2"><path d="M319 557h246M784 557h347M319 586h246M784 586h347M660 118v18M689 118v18M660 586v134M689 586v134"/></g>
        <g stroke="#c00000"><path d="M319 136.500h855" stroke="#e00000"/><path d="M319 194.500h341M690 194.500h484" stroke="#9a0000"/><path d="M337 571.500h228M784 571.500h347M674.500 118v18M674.500 586v134"/><path d="M1174 488 765.500 468.500 753 711"/></g>
        <path d="M565 557h95v-44h29v44h95v29H565zM660 137h29v86h-29zM1131 557h44v29h-44z" fill="#8a00ff" stroke="#7a6a20"/>
        <path d="M660 223h29v290h-29z" fill="#f7f7f7"/>
        <path d="M659.500 223v290M689.500 137v376" stroke="#6f6f2a"/>
        <path d="M539 492.500h88.500l32 63.500M648 118l12 18M1104 492.500h70" stroke="#b65cc0"/>
        <g class="cad"><text x="538" y="490">T442</text><text x="527" y="531">24C16</text><text x="553" y="141">6C16</text><text x="1115" y="490">T433</text><text x="1093" y="531">24C16</text><text class="yellow" x="720" y="226">LC1</text></g>
        <g stroke="#0a5f14"><circle cx="328" cy="194.500" r="8"/><circle cx="328" cy="571.500" r="8"/><circle cx="892" cy="126.500" r="8"/><circle cx="674" cy="711.500" r="8"/><circle cx="753" cy="711.500" r="8"/><circle cx="1159" cy="487" r="8"/></g>
        <g class="axis"><text x="328" y="199">B</text><text x="328" y="576">A</text><text x="892" y="131">25</text><text x="674" y="716">a-1</text><text x="753" y="716">a-1</text><text x="1159" y="491">2.65°</text></g>
        <path d="M743 479 695 474 595 474 523 471H417Q410 471 410 474L407 497V550Q407 562 410 572L416 585 426 599 440 609 465 619 533 631 587 638 647 644H821L836 642 849 633Q854 628 854 624V583L849 557 842 540 828 520 802 511 747 498 732 493 725 488 722 483" stroke="#ff3434" stroke-width="5" stroke-linecap="round" stroke-linejoin="round"/>
        <path d="M354.500 684v-14" stroke="#00ff00" stroke-width="3"/><path d="m354.500 663-4 9h8z" fill="#00ff00"/><path d="M355 684.500h14" stroke="#f00" stroke-width="3"/><path d="m376 684.500-9-3v6z" fill="#f00"/><circle cx="354.500" cy="684.500" r="4" fill="#0000c8"/>
        <g class="axes"><text x="354" y="662" fill="#00e000">Y</text><text x="380" y="689" fill="#e80000">X</text></g>
      </g>
    </svg>
    <div class="viewbar"><button aria-label="动态观察"><svg><use href="#i-orbit"/></svg></button><button class="two"><svg><use href="#i-2d"/></svg><b>2D</b></button><button aria-label="俯视"><svg><use href="#i-box"/></svg></button><i class="caret"></i><button aria-label="实体"><svg><use href="#i-cube"/></svg></button><i class="caret"></i><button aria-label="旋转"><svg><use href="#i-turn"/></svg></button><i class="caret"></i><hr><button aria-label="显示"><svg><use href="#i-prop"/></svg></button></div>
  </section>

  <div class="split"><i></i></div>

  <aside class="display">
    <div class="grip"><button aria-label="关闭显示设置"><svg><use href="#i-close"/></svg></button></div>
    <h2 class="ptitle">显示设置</h2>
    <div class="dtabs"><button>图元显示</button><button class="on">楼层显示</button></div>
    <div class="radios"><label><input type="radio" name="f" checked>当前楼层</label><label><input type="radio" name="f">相邻楼层</label><label><input type="radio" name="f">全部楼层</label></div>
    <div class="floors">
      <div class="root"><svg class="tri" viewBox="0 0 6 6"><path d="M6 0v6H0z" fill="#222"/></svg><label><input type="checkbox" disabled>全部楼层</label></div>
      <ul>
        <li><label><input type="checkbox" disabled>机房层</label></li>
        <li><label><input type="checkbox" disabled>第22层</label></li>
        <li><label><input type="checkbox" disabled>第21层</label></li>
        <li><label><input type="checkbox" disabled>第20层</label></li>
        <li><label><input type="checkbox" disabled>第19层</label></li>
        <li><label><input type="checkbox" disabled>第18层</label></li>
        <li><label><input type="checkbox" disabled>第17层</label></li>
        <li><label><input type="checkbox" disabled>第16层</label></li>
        <li><label><input type="checkbox" disabled>第15层</label></li>
        <li><label><input type="checkbox" disabled>第14层</label></li>
        <li><label><input type="checkbox" disabled>第13层</label></li>
        <li><label><input type="checkbox" disabled>第12层</label></li>
        <li><label><input type="checkbox" disabled>第11层</label></li>
        <li><label><input type="checkbox" disabled>第10层</label></li>
        <li><label><input type="checkbox" disabled>第9层</label></li>
        <li><label><input type="checkbox" disabled>第8层</label></li>
        <li><label><input type="checkbox" disabled>第7层</label></li>
        <li><label><input type="checkbox" disabled>第6层</label></li>
        <li><label><input type="checkbox" disabled>第5层</label></li>
        <li><label><input type="checkbox" disabled checked>第4层</label></li>
        <li><label><input type="checkbox" disabled>第3层</label></li>
        <li><label><input type="checkbox" disabled>第2层</label></li>
        <li><label><input type="checkbox" disabled>首层</label></li>
        <li><label><input type="checkbox" disabled>B1</label></li>
        <li><label><input type="checkbox" disabled>B2</label></li>
        <li><label><input type="checkbox" disabled>基础层</label></li>
      </ul>
      <i class="meter"></i>
    </div>
    <label class="other"><input type="checkbox">其他区域图元亮显</label>
  </aside>
</main>

<footer class="status">
  <span class="xyz">X = 72272 Y = 23309 Z = 10500</span><span class="h">层高： 2.8</span><span class="lv">标高： 10.5~13.3</span><span class="n">0</span><span class="hid">隐藏：0</span>
  <div class="modesbar"><button aria-label="正交"><svg><use href="#i-angle"/></svg></button><button class="on" aria-label="框选"><svg><use href="#i-boxsel"/></svg><i class="caret"></i></button><button disabled aria-label="交点"><svg><use href="#i-cross"/></svg></button><button aria-label="角度"><svg><use href="#i-slope"/></svg><i class="caret"></i></button><button aria-label="偏移"><svg><use href="#i-plusbox"/></svg><i class="caret"></i></button><button>跨图层选择</button><button>折线选择</button></div>
  <span>按鼠标左键指定第一个角点，或拾取构件图元</span><span class="fps">333.333 FPS</span>
</footer>
</body>
</html>
```

FILE: styles.css
```css
* { box-sizing: border-box; }
body {
  margin: 0; height: 100vh; overflow: hidden;
  display: flex; flex-direction: column;
  border-left: 6px solid #777a79; border-right: 2px solid #8d8f90;
  background: #fff; color: #111;
  font: 9px/12px "Noto Sans", "Noto Sans CJK SC", sans-serif;
}
button, input, select { font: inherit; color: inherit; margin: 0; padding: 0; border: 0; background: none; }
button { display: flex; align-items: center; white-space: nowrap; }
svg { display: block; width: 12px; height: 12px; flex: none; }
.sprite { position: absolute; width: 0; height: 0; }
ul, p, h1, h2 { margin: 0; padding: 0; list-style: none; font-size: inherit; font-weight: normal; }
.caret { flex: none; width: 5px; height: 3px; background: #666; clip-path: polygon(0 0, 100% 0, 50% 100%); }
.caret.dim { background: #aaa; }

/* title bar */
.titlebar { display: flex; flex: none; border-bottom: 1px solid #e2e2e2; }
.logo { width: 22px; height: 22px; margin: 5px 4px 0 6px; }
.titlerows { flex: 1; border-left: 1px solid #ddd; }
.toprow { display: flex; align-items: center; height: 15px; }
.quick { display: flex; align-items: center; gap: 4px; padding-left: 5px; width: 426px; }
.quick button { gap: 3px; }
.apptitle { flex: 1; padding-left: 25px; white-space: nowrap; }
.winctl { display: flex; gap: 13px; padding-right: 7px; }
.tabrow { display: flex; justify-content: space-between; height: 13px; }
.tabs { display: flex; padding-left: 2px; }
.tabs button { padding: 0 9px; color: #333; }
.tabs .on { background: #55a5f5; color: #fff; }
.help { display: flex; align-items: center; gap: 7px; padding-right: 3px; }
.ask { display: flex; align-items: center; width: 174px; height: 12px; border: 1px solid #ccc; padding: 0 3px 0 1px; color: #999; }
.ask input { flex: 1; min-width: 0; }
.ask svg { width: 8px; height: 8px; }
input::placeholder { color: #a8a8a8; opacity: 1; }
.user { gap: 2px; }
.helpicons { display: flex; gap: 5px; padding-left: 1px; }
.helpicons svg { width: 11px; height: 11px; }
.q { width: 11px; font-size: 12px; color: #888; }

/* ribbon */
.ribbon { display: flex; flex: none; border-bottom: 2px solid #a9acaf; background: linear-gradient(#fff 0%, #fff 40%, #e9ecee 100%); }
.group { padding: 2px 0 0; border-right: 1px solid #d3d6d8; }
.tools { display: grid; height: 49px; }
.stack { display: grid; grid-template-rows: repeat(3, 1fr); }
.stack button { gap: 2px; }
.stack .caret { margin-left: 2px; }
.stack button:disabled, .big:disabled { color: #aaa; }
.big { flex-direction: column; justify-self: center; padding-top: 3px; gap: 3px; height: 46px; }
.big svg { width: 22px; height: 22px; }
.big.on { background: #c8d9f0; width: 28px; height: 48px; }
.name { display: flex; justify-content: center; align-items: center; gap: 4px; height: 17px; padding-top: 2px; }
.g1 { width: 105px; padding-left: 6px; }
.g1 .tools { grid-template-columns: 31px 1fr; }
.g1 .big { justify-self: start; }
.g2 { width: 138px; padding-left: 5px; }
.g2 .tools { grid-template-columns: 56px 1fr; }
.g3 { width: 197px; padding-left: 6px; }
.g3 .tools { grid-template-columns: 48px 78px 1fr; }
.g4 { width: 169px; padding-left: 6px; }
.g4 .tools { grid-template-columns: 39px 38px 39px 1fr; }
.g5 { width: 85px; padding-left: 3px; }
.g5 .tools { grid-template-columns: 30px 31px 1fr; }
.g5 .stack { padding-left: 1px; }
.g6 { width: 263px; }
.g6 .tools { grid-template-columns: 44px 44px 38px 70px 1fr; }
.g7 { width: 166px; }
.g7 .tools { grid-template-columns: 43px 64px 1fr; }

/* floor and component pickers */
.picker { display: flex; flex: none; gap: 1px; padding: 2px 1px; background: #c9ccd1; }
.picker select {
  appearance: none; width: 71px; height: 15px; padding-left: 2px; border: 1px solid #aeb1b5;
  background:
    linear-gradient(#666, #666) no-repeat right 6px top 6px / 1px 2px,
    linear-gradient(#666, #666) no-repeat right 5px top 5px / 3px 1px,
    #fff;
}

/* work area */
.work { display: flex; flex: 1; min-height: 0; background: #e9eaed; }
.grip { display: flex; justify-content: flex-end; align-items: center; height: 9px; background: #d0d2d9; color: #555; padding-right: 1px; flex: none; }
.grip svg { width: 9px; height: 9px; }
.ptitle { height: 16px; line-height: 15px; padding-left: 5px; background: #efefef; border-bottom: 1px solid #d8d8d8; color: #777; flex: none; }
.nav { width: 111px; border: 1px solid #c8cbd1; border-top: 0; background: #fff; overflow: hidden; }
.navbar { display: flex; justify-content: space-between; align-items: center; height: 20px; padding: 0 2px 0 3px; background: #efefef; border-bottom: 1px solid #ddd; }
.modes { display: flex; gap: 3px; }
.modes button { width: 17px; height: 16px; justify-content: center; border: 1px solid #62a8f0; border-radius: 2px; background: #e8f3fe; }
.tree { padding-top: 1px; }
.tree span, .tree ul li { display: flex; align-items: center; height: 17px; gap: 4px; padding-left: 1px; white-space: nowrap; }
.tree span svg { width: 11px; height: 11px; }
.tree ul { padding: 1px 2px 0 28px; }
.tree ul li { padding-left: 2px; }
.tree ul .on { height: 15px; margin: 1px 0; background: #c8d9f0; }

.mid { display: flex; flex-direction: column; width: 196px; margin-left: 3px; background: #efefef; }
.comps { display: flex; flex-direction: column; flex: 1; min-height: 0; border-bottom: 1px solid #c6c9ce; }
.ptabs { display: flex; height: 16px; flex: none; }
.ptabs button { width: 46px; justify-content: center; background: #dcdde0; color: #888; border: 1px solid #c4c6cb; border-width: 1px 1px 0 0; }
.ptabs .on { background: #f3f3f3; color: #111; font-weight: 600; border-color: transparent; }
.compbar { display: flex; align-items: center; gap: 5px; height: 20px; padding: 0 0 0 4px; flex: none; }
.compbar button { gap: 2px; }
.compbar .more { margin-left: auto; }
.find { display: flex; align-items: center; height: 14px; flex: none; background: #fff; border-bottom: 1px solid #bbb; padding: 0 5px 0 1px; color: #3a8fd0; }
.find input { flex: 1; min-width: 0; }
.find svg { width: 9px; height: 9px; }
.find input::placeholder { color: #777; }
.listbox { position: relative; flex: 1; min-height: 0; overflow: hidden; background: #fff; padding-top: 2px; border-left: 1px solid #ddd; }
.listbox li { height: 17px; line-height: 17px; padding-left: 44px; }
.listbox li:has(mark) { padding: 1px 0 1px 42px; }
.listbox mark { display: block; width: 36px; height: 15px; line-height: 15px; padding-left: 2px; background: #b1ccee; color: #111; }
.thumb { position: absolute; right: 2px; top: 91px; width: 6px; height: 69px; border-radius: 3px; background: #c6c6c6; }
.props { display: flex; flex-direction: column; flex: none; margin-top: 3px; }
.tablebox { position: relative; height: 243px; overflow: hidden; background: #efefef; border-bottom: 1px solid #ccc; }
.tablebox .thumb { top: 10px; height: 124px; }
table { border-collapse: collapse; table-layout: fixed; width: 184px; background: #fff; }
.c1 { width: 15px; } .c2 { width: 72px; } .c3 { width: 68px; } .c4 { width: 29px; }
th, td { height: 15px; padding: 0 2px; border: 1px solid #d3d3d3; line-height: 12px; white-space: nowrap; overflow: hidden; }
th { font-weight: normal; background: #efefef; color: #333; text-align: center; padding: 0; }
td:nth-child(2) { color: #2563eb; }
td.plain { color: #111; }
td.off { background: #e9e9e9; }
td:last-child { text-align: center; line-height: 10px; }
.bar { display: inline-block; width: 8px; height: 9px; }
input[type=checkbox] { appearance: none; display: inline-block; flex: none; width: 10px; height: 10px; border: 1px solid #8a8a8a; border-radius: 2px; background: #fff; vertical-align: top; }
.foot { height: 22px; padding: 3px 4px; }
.foot button { height: 16px; width: 57px; justify-content: center; background: #fff; border: 1px solid #ccc; border-radius: 2px; }

.split { display: flex; align-items: center; width: 3px; background: #e4e6ea; }
.split i { width: 3px; height: 71px; background: #505867; }

/* drawing */
.canvas { position: relative; flex: 1; min-width: 0; background: #000; overflow: hidden; }
.drawing { width: 100%; height: 100%; }
.cad text { font: 300 30px "Liberation Sans Narrow", "Roboto Condensed", "DejaVu Sans Condensed", sans-serif; fill: #b765c4; }
.cad .yellow { fill: #a8a800; }
.axis text { font: 12px "Noto Sans", sans-serif; fill: #f2f2f2; text-anchor: middle; }
.axes text { font: 11px "Noto Sans", sans-serif; text-anchor: middle; }
.viewbar { position: absolute; right: 1px; top: 0; width: 23px; display: flex; flex-direction: column; align-items: center; gap: 3px; padding: 7px 0 8px; background: #98999c; }
.viewbar svg { width: 18px; height: 18px; }
.viewbar .caret { background: #303030; height: 2px; margin-top: 2px; }
.viewbar hr { width: 18px; margin: 0; border: 0; border-top: 1px solid #666; }
.two { position: relative; }
.two b { position: absolute; right: 2px; bottom: 0; font-size: 7px; line-height: 8px; color: #222; }

/* display settings */
.display { display: flex; flex-direction: column; width: 198px; background: #fff; border-bottom: 1px solid #ccc; }
.dtabs { display: flex; gap: 3px; height: 20px; padding: 3px 2px 0; background: #efefef; flex: none; border-bottom: 1px solid #ddd; }
.dtabs button { width: 53px; justify-content: center; background: #dedede; border-radius: 3px 3px 0 0; color: #555; }
.dtabs .on { background: #fff; color: #3b8ee8; }
.radios { display: flex; height: 20px; align-items: center; gap: 14px; padding-left: 5px; flex: none; border-bottom: 1px solid #ccc; }
.radios label, .floors label, .other { display: flex; align-items: center; gap: 5px; white-space: nowrap; }
.radios input { appearance: none; width: 10px; height: 10px; border: 1px solid #888; border-radius: 50%; }
.radios input:checked { background: radial-gradient(circle, #2f86e0 0 2px, #fff 3px); border-color: #5c9fe6; }
.floors { position: relative; flex: 1; min-height: 0; padding: 3px 0 0 5px; border: 1px solid #d4d6da; border-top: 0; color: #858585; }
.root { display: flex; align-items: center; gap: 7px; height: 17px; }
.tri { width: 5px; height: 5px; }
.floors ul { padding-left: 26px; }
.floors li { height: 17px; display: flex; align-items: center; }
.floors input { border-color: #aaa; background: #f2f2f2; }
.floors input:checked { position: relative; }
.floors input:checked::after { content: ""; position: absolute; left: 2px; top: 1px; width: 5px; height: 3px; border: 1px solid #888; border-width: 0 0 1px 1px; rotate: -45deg; }
.meter { position: absolute; right: 0; top: 166px; width: 5px; height: 41px; border-radius: 3px; background: linear-gradient(#606060 0 20px, transparent 20px), repeating-linear-gradient(#606060 0 1px, #35b558 1px 3px); }
.other { height: 27px; gap: 3px; padding-left: 1px; flex: none; }

/* status bar */
.status { display: flex; align-items: flex-end; height: 16px; flex: none; background: #dcdddf; color: #333; white-space: nowrap; overflow: hidden; padding-right: 8px; line-height: 11px; }
.xyz { width: 189px; padding-left: 1px; }
.h { width: 59px; }
.lv { width: 95px; }
.n { width: 73px; }
.hid { width: 74px; }
.modesbar { display: flex; gap: 3px; height: 14px; margin-right: 3px; }
.modesbar button { padding: 0 2px; gap: 3px; border: 1px solid #999; background: #cfd0d2; height: 16px; }
.modesbar .on { background: #fff; border-color: #2f8cf0; }
.fps { margin-left: auto; }
```
